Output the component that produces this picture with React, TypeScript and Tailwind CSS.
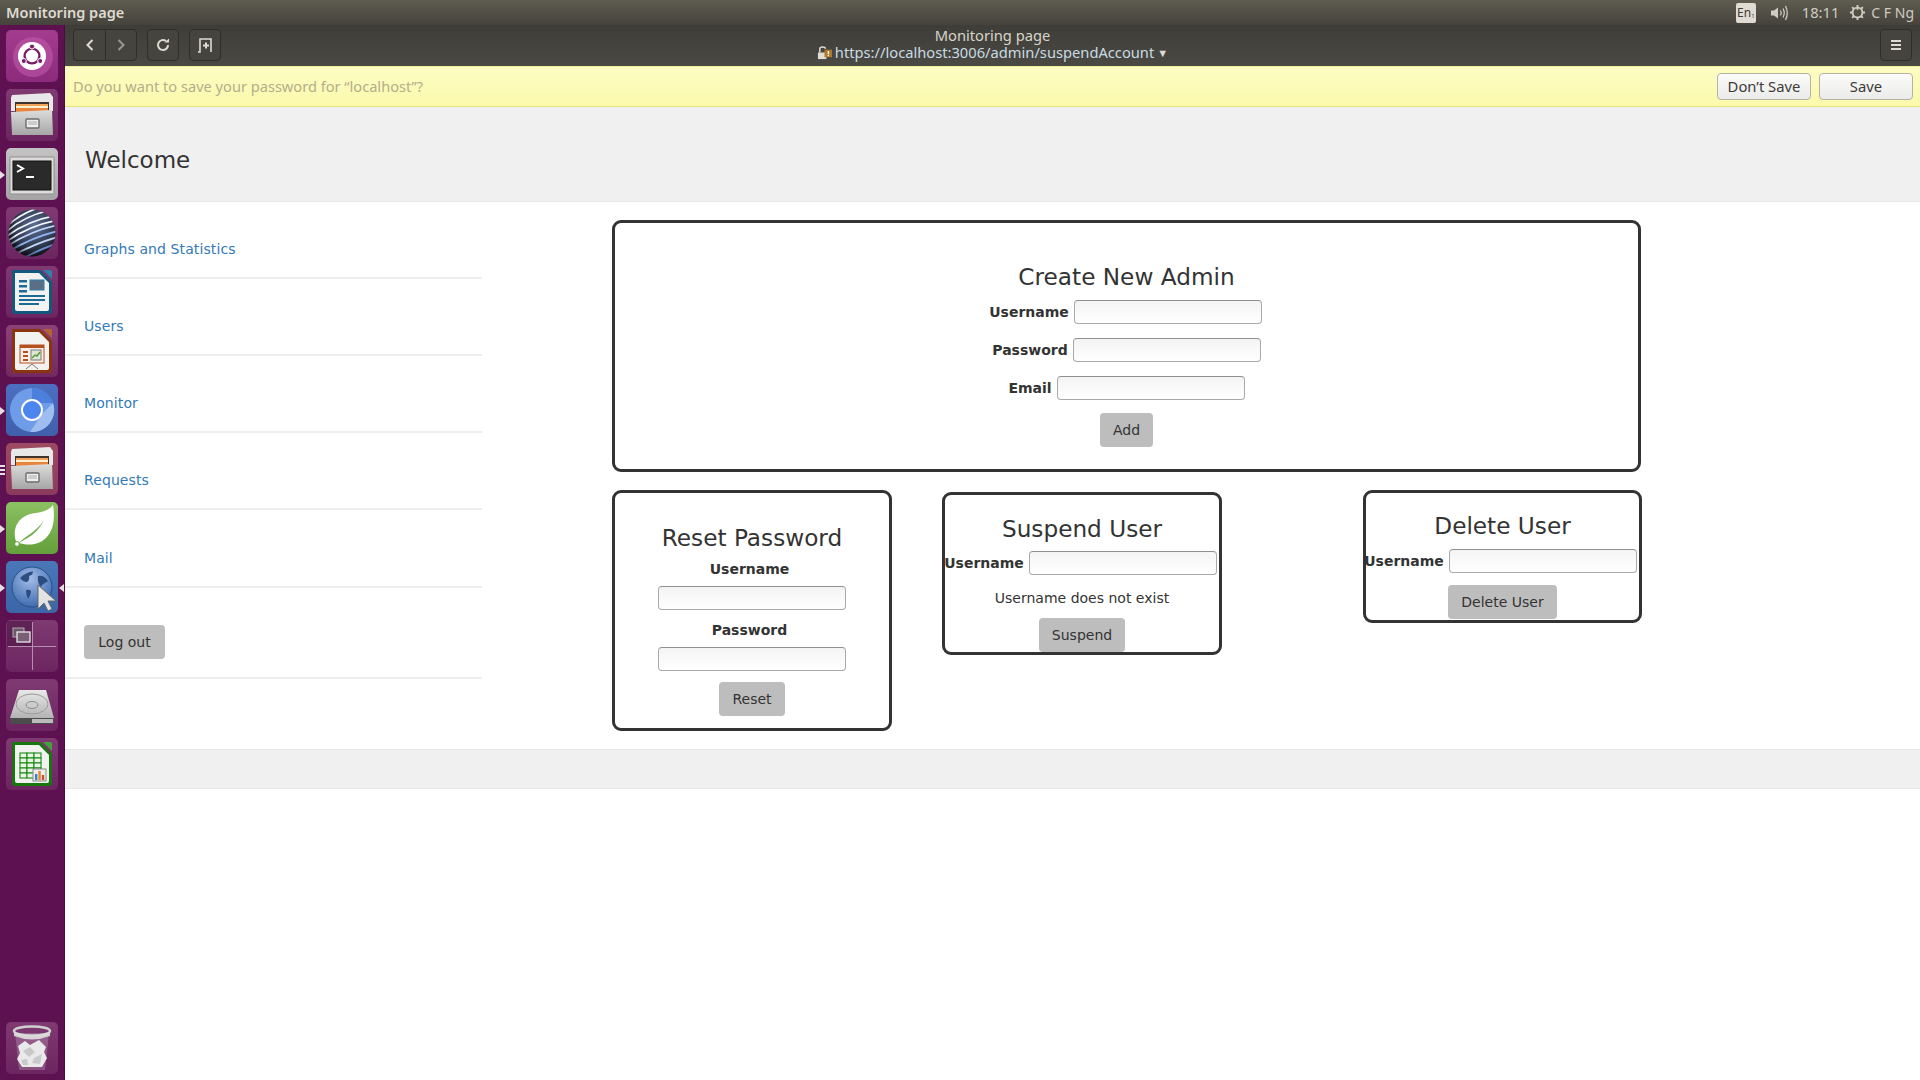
import React from "react";

const ui = "font-['Noto_Sans','Open_Sans',sans-serif]";
const web = "font-['DejaVu_Sans',sans-serif]";

function Cabinet() {
  return (
    <svg viewBox="0 0 52 52" className="w-[52px] h-[52px]">
      <defs>
        <linearGradient id="cab" x1="0" y1="0" x2="0" y2="1"><stop offset="0" stopColor="#dcdcdc" /><stop offset="1" stopColor="#a6a6a6" /></linearGradient>
      </defs>
      <path d="M6 6 L44 4 L47 8 V22 H5 V9Z" fill="#e8e8e8" />
      <rect x="9" y="13" width="34" height="10" fill="#3f342d" />
      <rect x="10" y="15" width="32" height="2" fill="#f2a45a" />
      <rect x="10" y="17" width="32" height="2" fill="#fdf0d0" />
      <rect x="10" y="19" width="32" height="4" fill="#e8853a" />
      <path d="M5 23 L46 21 L47 46 H6Z" fill="url(#cab)" />
      <rect x="20" y="30" width="13" height="9" rx="1" fill="#eeeeee" stroke="#6b6b6b" strokeWidth="1.4" />
      <rect x="22" y="32" width="9" height="4" fill="#cccccc" />
    </svg>
  );
}

function Doc({ edge, corner, children }: { edge: string; corner: string; children: React.ReactNode }) {
  return (
    <svg viewBox="0 0 52 52" className="w-[52px] h-[52px]">
      <path d="M6 4 H34 L46 16 V45 Q46 48 43 48 H9 Q6 48 6 45Z" fill={edge} />
      <path d="M37 4 H44 Q46 4 46 6 V13Z" fill={corner} />
      <path d="M9 7 H33 L43 17 V43 Q43 45 41 45 H11 Q9 45 9 43Z" fill="#f2f2f0" />
      {children}
    </svg>
  );
}

function Ubuntu() {
  return (
    <svg viewBox="0 0 52 52" className="w-[52px] h-[52px]">
      <circle cx="27" cy="27" r="20" fill="#c562ad" opacity="0.5" />
      <circle cx="26" cy="26" r="14" fill="#ffffff" />
      <circle cx="26" cy="26" r="7.4" fill="none" stroke="#7b1d66" strokeWidth="2.4" />
      <circle cx="26" cy="16.5" r="2.5" fill="#7b1d66" stroke="#fff" />
      <circle cx="17.8" cy="31" r="2.5" fill="#7b1d66" stroke="#fff" />
      <circle cx="34.2" cy="31" r="2.5" fill="#7b1d66" stroke="#fff" />
    </svg>
  );
}

function Terminal() {
  return (
    <svg viewBox="0 0 52 52" className="w-[52px] h-[52px]">
      <rect x="4" y="9" width="44" height="37" rx="1" fill="#dcdcdc" stroke="#8f8f8f" />
      <rect x="7" y="13" width="38" height="29" fill="#2a2a2a" stroke="#111" />
      <path d="M11 17 L17 20.5 L11 24" fill="none" stroke="#fff" strokeWidth="2" />
      <rect x="20" y="28" width="8" height="2" fill="#fff" />
    </svg>
  );
}

function StripedGlobe() {
  return (
    <svg viewBox="0 0 52 52" className="w-[52px] h-[52px]">
      <defs>
        <radialGradient id="sg" cx="0.55" cy="0.35" r="0.75"><stop offset="0" stopColor="#5d6f96" /><stop offset="1" stopColor="#10121a" /></radialGradient>
        <radialGradient id="sgs" cx="0.55" cy="0.42" r="0.62"><stop offset="0.68" stopColor="#000" stopOpacity="0" /><stop offset="1" stopColor="#000" stopOpacity="0.65" /></radialGradient>
        <clipPath id="sgc"><circle cx="26" cy="26" r="23.5" /></clipPath>
      </defs>
      <circle cx="26" cy="26" r="23.5" fill="url(#sg)" />
      <g clipPath="url(#sgc)" fill="none" stroke="#f1f4fc" strokeWidth="1.8">
        <path d="M0 30 Q20 14 52 8" /><path d="M0 35 Q22 19 52 13" /><path d="M0 40 Q24 24 52 18" stroke="#c3d4f7" />
        <path d="M0 46 Q26 30 52 24" stroke="#8fb0f0" /><path d="M4 50 Q30 36 52 30" stroke="#c3d4f7" /><path d="M12 54 Q34 42 52 36" stroke="#7fa3ee" />
        <path d="M20 56 Q36 48 52 42" stroke="#6f96e6" />
        <path d="M0 25 Q16 10 44 3" /><path d="M0 20 Q12 8 34 0" />
      </g>
      <circle cx="26" cy="26" r="23.5" fill="url(#sgs)" />
    </svg>
  );
}

function Chromium() {
  return (
    <svg viewBox="0 0 52 52" className="w-[52px] h-[52px]">
      <circle cx="26" cy="26" r="22" fill="#6f9ce8" />
      <path d="M26 4 A22 22 0 0 1 47 19 H26Z" fill="#4d80dc" />
      <path d="M47 19 A22 22 0 0 1 24 48 L36 30Z" fill="#9fbdf1" />
      <circle cx="26" cy="26" r="10" fill="#4a86ee" stroke="#ffffff" strokeWidth="2" />
    </svg>
  );
}

function Leaf() {
  return (
    <svg viewBox="0 0 52 52" className="w-[52px] h-[52px]">
      <path d="M11 42 C4 26 14 12 30 11 C38 10 44 7 47 3 C50 20 46 36 32 41 C24 44 17 42 13 41 C20 36 30 34 38 18 C30 30 20 34 11 42Z" fill="#ffffff" />
      <circle cx="11" cy="42" r="2.4" fill="#ffffff" stroke="#5e9f37" />
    </svg>
  );
}

function EarthCursor() {
  return (
    <svg viewBox="0 0 52 52" className="w-[52px] h-[52px]">
      <defs>
        <radialGradient id="eg" cx="0.45" cy="0.3" r="0.75"><stop offset="0" stopColor="#a3bce6" /><stop offset="1" stopColor="#3767ad" /></radialGradient>
      </defs>
      <circle cx="26" cy="26" r="20" fill="url(#eg)" stroke="#2b5088" />
      <path d="M14 17 Q20 11 27 10.5 Q27 14 23 15 Q24 19 21 21 Q17 21 14 17Z" fill="#2c4d80" />
      <path d="M20 29 Q25 28 25 31 Q24 36 22 38 Q20 34 20 29Z" fill="#2c4d80" />
      <path d="M32 15 Q38 14 42 20 L39 22 Q36 23 35 26 Q31 22 32 15Z" fill="#2c4d80" />
      <path d="M32 24 L32 48 L38 42 L42 50 L46 48 L42 40 L50 40Z" fill="#e3e3e3" stroke="#666" strokeWidth="1" />
    </svg>
  );
}

function Workspaces() {
  return (
    <svg viewBox="0 0 52 52" className="w-[52px] h-[52px]">
      <rect x="1" y="1" width="26" height="25" fill="#3a0b33" opacity="0.45" />
      <path d="M26.5 2 V50 M2 26.5 H50" stroke="#b98db0" strokeWidth="1" />
      <rect x="7" y="8" width="11" height="9" fill="#6b5868" stroke="#b5a7b1" />
      <rect x="11" y="12" width="13" height="10" fill="#7a5f76" stroke="#ebe6ea" strokeWidth="1.3" />
    </svg>
  );
}

function Drive() {
  return (
    <svg viewBox="0 0 52 52" className="w-[52px] h-[52px]">
      <defs>
        <linearGradient id="dg" x1="0" y1="0" x2="0" y2="1"><stop offset="0" stopColor="#e8e8e8" /><stop offset="1" stopColor="#b3b3b3" /></linearGradient>
      </defs>
      <path d="M13 11 H40 L48 39 H4Z" fill="url(#dg)" />
      <ellipse cx="26" cy="25" rx="16" ry="10" fill="none" stroke="#9b9b9b" />
      <ellipse cx="26" cy="26" rx="6" ry="3.5" fill="none" stroke="#8a8a8a" />
      <rect x="4" y="39" width="44" height="6" rx="1" fill="#4c4c4c" />
      <rect x="26" y="40" width="21" height="4" fill="#bcbcbc" />
    </svg>
  );
}

function Trash() {
  return (
    <svg viewBox="0 0 52 52" className="w-[52px] h-[52px]">
      <path d="M9 11 L13 48 H39 L43 11Z" fill="#ffffff" opacity="0.2" />
      <path d="M12 24 L19 19 L24 23 L33 18 L40 25 L38 30 L41 36 L36 45 L16 45 L11 37 L14 31Z" fill="#e9e9e9" />
      <path d="M17 29 L24 25 L29 30 L23 35Z M28 36 L36 32 L34 42 L26 41Z M15 38 L21 37 L22 43 L17 43Z" fill="#c9c9c9" />
      <ellipse cx="26" cy="9" rx="18" ry="4.5" fill="none" stroke="#cfcfcf" strokeWidth="2.5" />
      <path d="M8 10 Q26 17 44 10 V14 Q26 21 8 14Z" fill="#dedede" opacity="0.9" />
    </svg>
  );
}

const tiles: { bg: string; node: React.ReactNode; dots?: "one" | "two"; right?: boolean }[] = [
  { bg: "bg-gradient-to-b from-[#a43c8e] to-[#8c2a7c]", node: <Ubuntu /> },
  { bg: "bg-gradient-to-b from-[#7f3a72] to-[#6c2560]", node: <Cabinet /> },
  { bg: "bg-gradient-to-b from-[#c4c2c3] to-[#a5a3a4]", node: <Terminal />, dots: "one" },
  { bg: "bg-gradient-to-b from-[#7f3a72] to-[#6c2560]", node: <StripedGlobe /> },
  {
    bg: "bg-gradient-to-b from-[#7f3a72] to-[#6c2560]",
    node: (
      <Doc edge="#14587f" corner="#2f80ab">
        <rect x="13" y="14" width="8" height="2.5" fill="#1c6a96" /><rect x="13" y="19" width="8" height="2.5" fill="#1c6a96" /><rect x="13" y="24" width="8" height="2.5" fill="#1c6a96" />
        <rect x="24" y="14" width="14" height="10" fill="#5a6f86" stroke="#2f7fa8" />
        <rect x="13" y="29" width="26" height="2" fill="#1c6a96" /><rect x="13" y="33" width="26" height="2" fill="#1c6a96" /><rect x="13" y="37" width="20" height="2" fill="#1c6a96" />
      </Doc>
    ),
  },
  {
    bg: "bg-gradient-to-b from-[#8b4278] to-[#72295f]",
    node: (
      <Doc edge="#8a3410" corner="#b5622f">
        <rect x="14" y="20" width="24" height="18" fill="#f6efe8" stroke="#b5501f" />
        <rect x="14" y="20" width="24" height="3" fill="#b5501f" />
        <rect x="17" y="26" width="5" height="2" fill="#b5501f" /><rect x="17" y="30" width="5" height="2" fill="#b5501f" /><rect x="17" y="34" width="5" height="2" fill="#b5501f" />
        <rect x="25" y="25" width="10" height="10" fill="#dfe8d8" stroke="#777" />
        <path d="M26 33 L29 30 L31 31 L34 27" fill="none" stroke="#4f9a35" strokeWidth="1.4" />
        <path d="M20 44 L26 39 L32 44" fill="none" stroke="#777" />
      </Doc>
    ),
  },
  { bg: "bg-gradient-to-b from-[#4c6fc0] to-[#4060ac]", node: <Chromium />, dots: "one" },
  { bg: "bg-gradient-to-b from-[#9e4a62] to-[#8a3a5c]", node: <Cabinet />, dots: "two" },
  { bg: "bg-gradient-to-b from-[#8cc161] to-[#639f3a]", node: <Leaf />, dots: "one" },
  { bg: "bg-gradient-to-b from-[#4a78b8] to-[#3b66a8]", node: <EarthCursor />, dots: "one", right: true },
  { bg: "bg-gradient-to-b from-[#7f3a72] to-[#6c2560]", node: <Workspaces /> },
  { bg: "bg-gradient-to-b from-[#7f3a72] to-[#6c2560]", node: <Drive /> },
  {
    bg: "bg-gradient-to-b from-[#7f3a72] to-[#6c2560]",
    node: (
      <Doc edge="#18760f" corner="#43a33a">
        <g fill="#eaf5e6" stroke="#1c8a16" strokeWidth="1.1">
          {[0, 1, 2, 3, 4].map((r) =>
            [0, 1, 2].map((c) => <rect key={`${r}-${c}`} x={14 + c * 7} y={15 + r * 5} width="7" height="5" />)
          )}
        </g>
        <rect x="27" y="31" width="13" height="12" fill="#eeeeee" stroke="#888" />
        <rect x="29" y="36" width="2.4" height="6" fill="#3a7fd0" /><rect x="32.4" y="33" width="2.4" height="9" fill="#e8862a" /><rect x="35.8" y="37" width="2.4" height="5" fill="#d04a3a" />
      </Doc>
    ),
  },
];

function Tile({ bg, node, dots, right }: { bg: string; node: React.ReactNode; dots?: "one" | "two"; right?: boolean }) {
  return (
    <div className="relative h-[52px] w-[52px] ml-[6px]">
      <div className={`h-[52px] w-[52px] rounded-[5px] ${bg} flex items-center justify-center overflow-hidden`}>{node}</div>
      {dots === "one" && <div className="absolute left-[-6px] top-[23px] w-0 h-0 border-y-[4px] border-y-transparent border-l-[5px] border-l-[#e6e0e4]" />}
      {dots === "two" && (
        <div className="absolute left-[-6px] top-[22px] flex flex-col gap-[2px]">
          <div className="h-[2px] w-[5px] bg-[#e6e0e4]" />
          <div className="h-[2px] w-[5px] bg-[#e6e0e4]" />
          <div className="h-[2px] w-[5px] bg-[#e6e0e4]" />
        </div>
      )}
      {right && <div className="absolute right-[-6px] top-[23px] w-0 h-0 border-y-[4px] border-y-transparent border-r-[5px] border-r-[#e6e0e4]" />}
    </div>
  );
}

function ToolBtn({ children, className = "" }: { children: React.ReactNode; className?: string }) {
  return (
    <div className={`h-[32px] w-[32px] rounded-[4px] border border-[#2f2e2a] bg-[#45443e] flex items-center justify-center ${className}`}>{children}</div>
  );
}

function Input({ className = "" }: { className?: string }) {
  return <input className={`h-[24px] w-[188px] shrink-0 rounded-[4px] border border-[#a9a9a9] border-t-[#8f8f8f] bg-gradient-to-b from-[#f4f4f4] to-[#ffffff] ${className}`} />;
}

function Btn({ children, className = "" }: { children: React.ReactNode; className?: string }) {
  return <button className={`h-[34px] rounded-[4px] bg-[#bdbdbd] px-[13px] text-[14px] text-[#333333] ${web} ${className}`}>{children}</button>;
}

function Label({ children, className = "" }: { children: React.ReactNode; className?: string }) {
  return <label className={`inline-block font-bold text-[14px] text-[#333333] mr-[5px] ${className}`}>{children}</label>;
}

function Row({ label, className = "" }: { label: string; className?: string }) {
  return (
    <div className={`h-[24px] flex items-center justify-center whitespace-nowrap ${className}`}>
      <Label>{label}</Label>
      <Input />
    </div>
  );
}

const cardCls = `border-[3px] border-[#333333] rounded-[9px] bg-white text-center ${web}`;
const heading = "text-[23.2px] leading-[36px] text-[#333333]";

export default function App() {
  return (
    <div className={`h-[1080px] w-[1920px] overflow-hidden flex flex-col bg-white ${ui}`}>
      <div className="h-[25px] shrink-0 bg-gradient-to-b from-[#5f5c50] to-[#45433c] flex items-center pl-[6px] text-[14.5px] font-semibold text-[#dfdbd2] leading-none">
        <span className="pb-[1px]">Monitoring page</span>
        <div className="ml-auto flex items-center h-full font-normal text-[14.7px] text-[#cfccc2]">
          <div className="h-[20px] w-[20px] rounded-[2px] bg-[#dfdbd2] text-[#3c3b37] text-[12px] flex items-center justify-center">En<span className="text-[6px] mt-[6px]">1</span></div>
          <svg viewBox="0 0 22 20" className="ml-[13px] w-[22px] h-[20px]" fill="none">
            <path d="M2 7.5 H5 L9 4.5 V15.5 L5 12.5 H2Z" fill="#cfccc2" />
            <path d="M11.5 7.5 Q13 10 11.5 12.5 M14 5.5 Q16.5 10 14 14.5 M16.5 3 Q20 10 16.5 17" stroke="#cfccc2" strokeWidth="1.3" />
          </svg>
          <span className="ml-[11px]">18:11</span>
          <svg viewBox="0 0 18 18" className="ml-[10px] w-[17px] h-[17px]" fill="none" stroke="#cfccc2">
            <circle cx="9" cy="9" r="5.2" strokeWidth="2" />
            <path d="M9 1 V6 M9 14 V17 M1 9 H3.5 M14.5 9 H17 M3.3 3.3 L5 5 M13 13 L14.7 14.7 M14.7 3.3 L13 5 M5 13 L3.3 14.7" strokeWidth="2" />
          </svg>
          <span className="ml-[5px] mr-[6px] text-[14px]">C F Ng</span>
        </div>
      </div>

      <div className="flex flex-1 min-h-0">
        <div className="w-[65px] shrink-0 bg-[#5e1150] border-r border-[#4d0c41] flex flex-col gap-[7px] pt-[5px] pb-[6px]">
          {tiles.map((t, i) => (
            <Tile key={i} {...t} />
          ))}
          <div className="mt-auto">
            <Tile bg="bg-gradient-to-b from-[#7f3a72] to-[#6c2560]" node={<Trash />} />
          </div>
        </div>

        <div className="flex-1 flex flex-col min-w-0">
          <div className="h-[41px] shrink-0 bg-gradient-to-b from-[#3e3d38] to-[#4b4943] flex items-center pl-[8px] pr-[8px] pb-[1px] relative">
            <div className="flex">
              <ToolBtn className="rounded-r-none border-r-0 bg-[#4a4943]">
                <svg viewBox="0 0 16 16" className="w-[16px] h-[16px]" fill="none" stroke="#dfdbd2" strokeWidth="2"><path d="M10.5 3 L5.5 8 L10.5 13" /></svg>
              </ToolBtn>
              <ToolBtn className="rounded-l-none bg-[#3c3b36]">
                <svg viewBox="0 0 16 16" className="w-[16px] h-[16px]" fill="none" stroke="#9b9890" strokeWidth="2"><path d="M5.5 3 L10.5 8 L5.5 13" /></svg>
              </ToolBtn>
            </div>
            <ToolBtn className="ml-[10px]">
              <svg viewBox="0 0 16 16" className="w-[16px] h-[16px]" fill="none" stroke="#dfdbd2" strokeWidth="2"><path d="M13 8 A5 5 0 1 1 11 4" /><path d="M9.5 5.5 H14 V1.5Z" fill="#dfdbd2" stroke="none" /></svg>
            </ToolBtn>
            <ToolBtn className="ml-[10px]">
              <svg viewBox="0 0 18 18" className="w-[18px] h-[18px]" fill="none" stroke="#dfdbd2" strokeWidth="1.6"><path d="M2 16 H4 L4 3 H15 V16" /><path d="M10 6.5 V12.5 M7 9.5 H13" strokeWidth="2" /></svg>
            </ToolBtn>
            <div className="absolute left-0 right-0 top-0 h-full flex flex-col items-center justify-center pointer-events-none text-[#d8d5ca] text-[14.7px] leading-[17px] pb-[4px]">
              <span>Monitoring page</span>
              <span className="flex items-center">
                <svg viewBox="0 0 16 16" className="w-[15px] h-[15px] mr-[3px]">
                  <rect x="1" y="8" width="9" height="7" fill="#e0ddd4" />
                  <path d="M3 8 V4 Q3 2 6 2 Q9 2 9 4" fill="none" stroke="#e0ddd4" strokeWidth="1.6" />
                  <rect x="8" y="5" width="8" height="8" fill="#b07a28" />
                  <rect x="11.4" y="6.4" width="1.5" height="3.4" fill="#fff" /><rect x="11.4" y="10.6" width="1.5" height="1.4" fill="#fff" />
                </svg>
                <span className="text-[#c9dbe3]">https://localhost:3006/admin/suspendAccount</span>
                <span className="ml-[3px] text-[11px] text-[#dfdbd2]">▼</span>
              </span>
            </div>
            <ToolBtn className="ml-auto">
              <svg viewBox="0 0 16 16" className="w-[16px] h-[16px]" fill="#dfdbd2"><rect x="3" y="3" width="10" height="2" /><rect x="3" y="7" width="10" height="2" /><rect x="3" y="11" width="10" height="2" /></svg>
            </ToolBtn>
          </div>

          <div className="h-[41px] shrink-0 bg-gradient-to-b from-[#fdfdc4] to-[#fbf9ab] border-t border-b border-t-[#f2ef9c] border-b-[#e6e37c] flex items-center pl-[8px] pr-[7px] text-[14.6px]">
            <span className="text-[#b4ae8c]">Do you want to save your password for “localhost”?</span>
            <button className="ml-auto h-[27px] w-[94px] rounded-[4px] border border-[#b5b2a5] bg-gradient-to-b from-[#fbfbfb] to-[#ebebe9] text-[#3c3b37] text-[14.8px]">Don’t Save</button>
            <button className="ml-[8px] h-[27px] w-[94px] rounded-[4px] border border-[#b5b2a5] bg-gradient-to-b from-[#fbfbfb] to-[#ebebe9] text-[#3c3b37] text-[14.8px]">Save</button>
          </div>

          <div className={`flex-1 min-h-0 flex flex-col ${web}`}>
            <div className="h-[95px] shrink-0 bg-[#f0f0f0] border-b border-[#e8e8e8] flex items-center pl-[20px] pt-[12px] text-[23px] text-[#333333]">Welcome</div>

            <div className="h-[547px] shrink-0 flex">
              <nav className="w-[417px] shrink-0 text-[14px] tracking-[0.1px] text-[#337ab7]">
                {["Graphs and Statistics", "Users", "Monitor", "Requests"].map((n) => (
                  <div key={n} className="h-[77px] border-b-2 border-[#eeeeee] flex items-center pl-[19px] pt-[20px]">{n}</div>
                ))}
                <div className="h-[78px] border-b-2 border-[#eeeeee] flex items-center pl-[19px] pt-[20px]">Mail</div>
                <div className="h-[91px] border-b-2 border-[#eeeeee] pl-[19px] pt-[37px] tracking-normal">
                  <Btn className="w-[81px] px-0">Log out</Btn>
                </div>
              </nav>

              <div className="ml-[130px] w-[1030px] shrink-0 pt-[18px]">
                <div className={`${cardCls} h-[252px] w-[1029px] pt-[36px]`}>
                  <h2 className={heading}>Create New Admin</h2>
                  <Row label="Username" className="mt-[5px] pr-[2px]" />
                  <Row label="Password" className="mt-[14px]" />
                  <Row label="Email" className="mt-[14px]" />
                  <Btn className="mt-[13px]">Add</Btn>
                </div>

                <div className="mt-[18px] flex items-start">
                  <div className={`${cardCls} h-[241px] w-[280px] shrink-0 pt-[27px]`}>
                    <h2 className={heading}>Reset Password</h2>
                    <div className="mt-[4px] h-[18px] leading-[18px]"><Label>Username</Label></div>
                    <Input className="block mx-auto mt-[8px]" />
                    <div className="mt-[11px] h-[18px] leading-[18px]"><Label>Password</Label></div>
                    <Input className="block mx-auto mt-[8px]" />
                    <Btn className="mt-[11px]">Reset</Btn>
                  </div>

                  <div className={`${cardCls} h-[163px] w-[280px] shrink-0 ml-[50px] mt-[2px] pt-[16px]`}>
                    <h2 className={heading}>Suspend User</h2>
                    <Row label="Username" className="mt-[4px] pr-[3px]" />
                    <p className="mt-[14px] text-[14px] leading-[18px] text-[#333333]">Username does not exist</p>
                    <Btn className="mt-[11px]">Suspend</Btn>
                  </div>

                  <div className={`${cardCls} h-[133px] w-[279px] shrink-0 ml-[141px] pt-[15px]`}>
                    <h2 className={heading}>Delete User</h2>
                    <Row label="Username" className="mt-[5px] pr-[4px]" />
                    <Btn className="mt-[12px]">Delete User</Btn>
                  </div>
                </div>
              </div>
            </div>

            <div className="h-[40px] shrink-0 bg-[#f0f0f0] border-y border-[#e8e8e8]" />
          </div>
        </div>
      </div>
    </div>
  );
}
